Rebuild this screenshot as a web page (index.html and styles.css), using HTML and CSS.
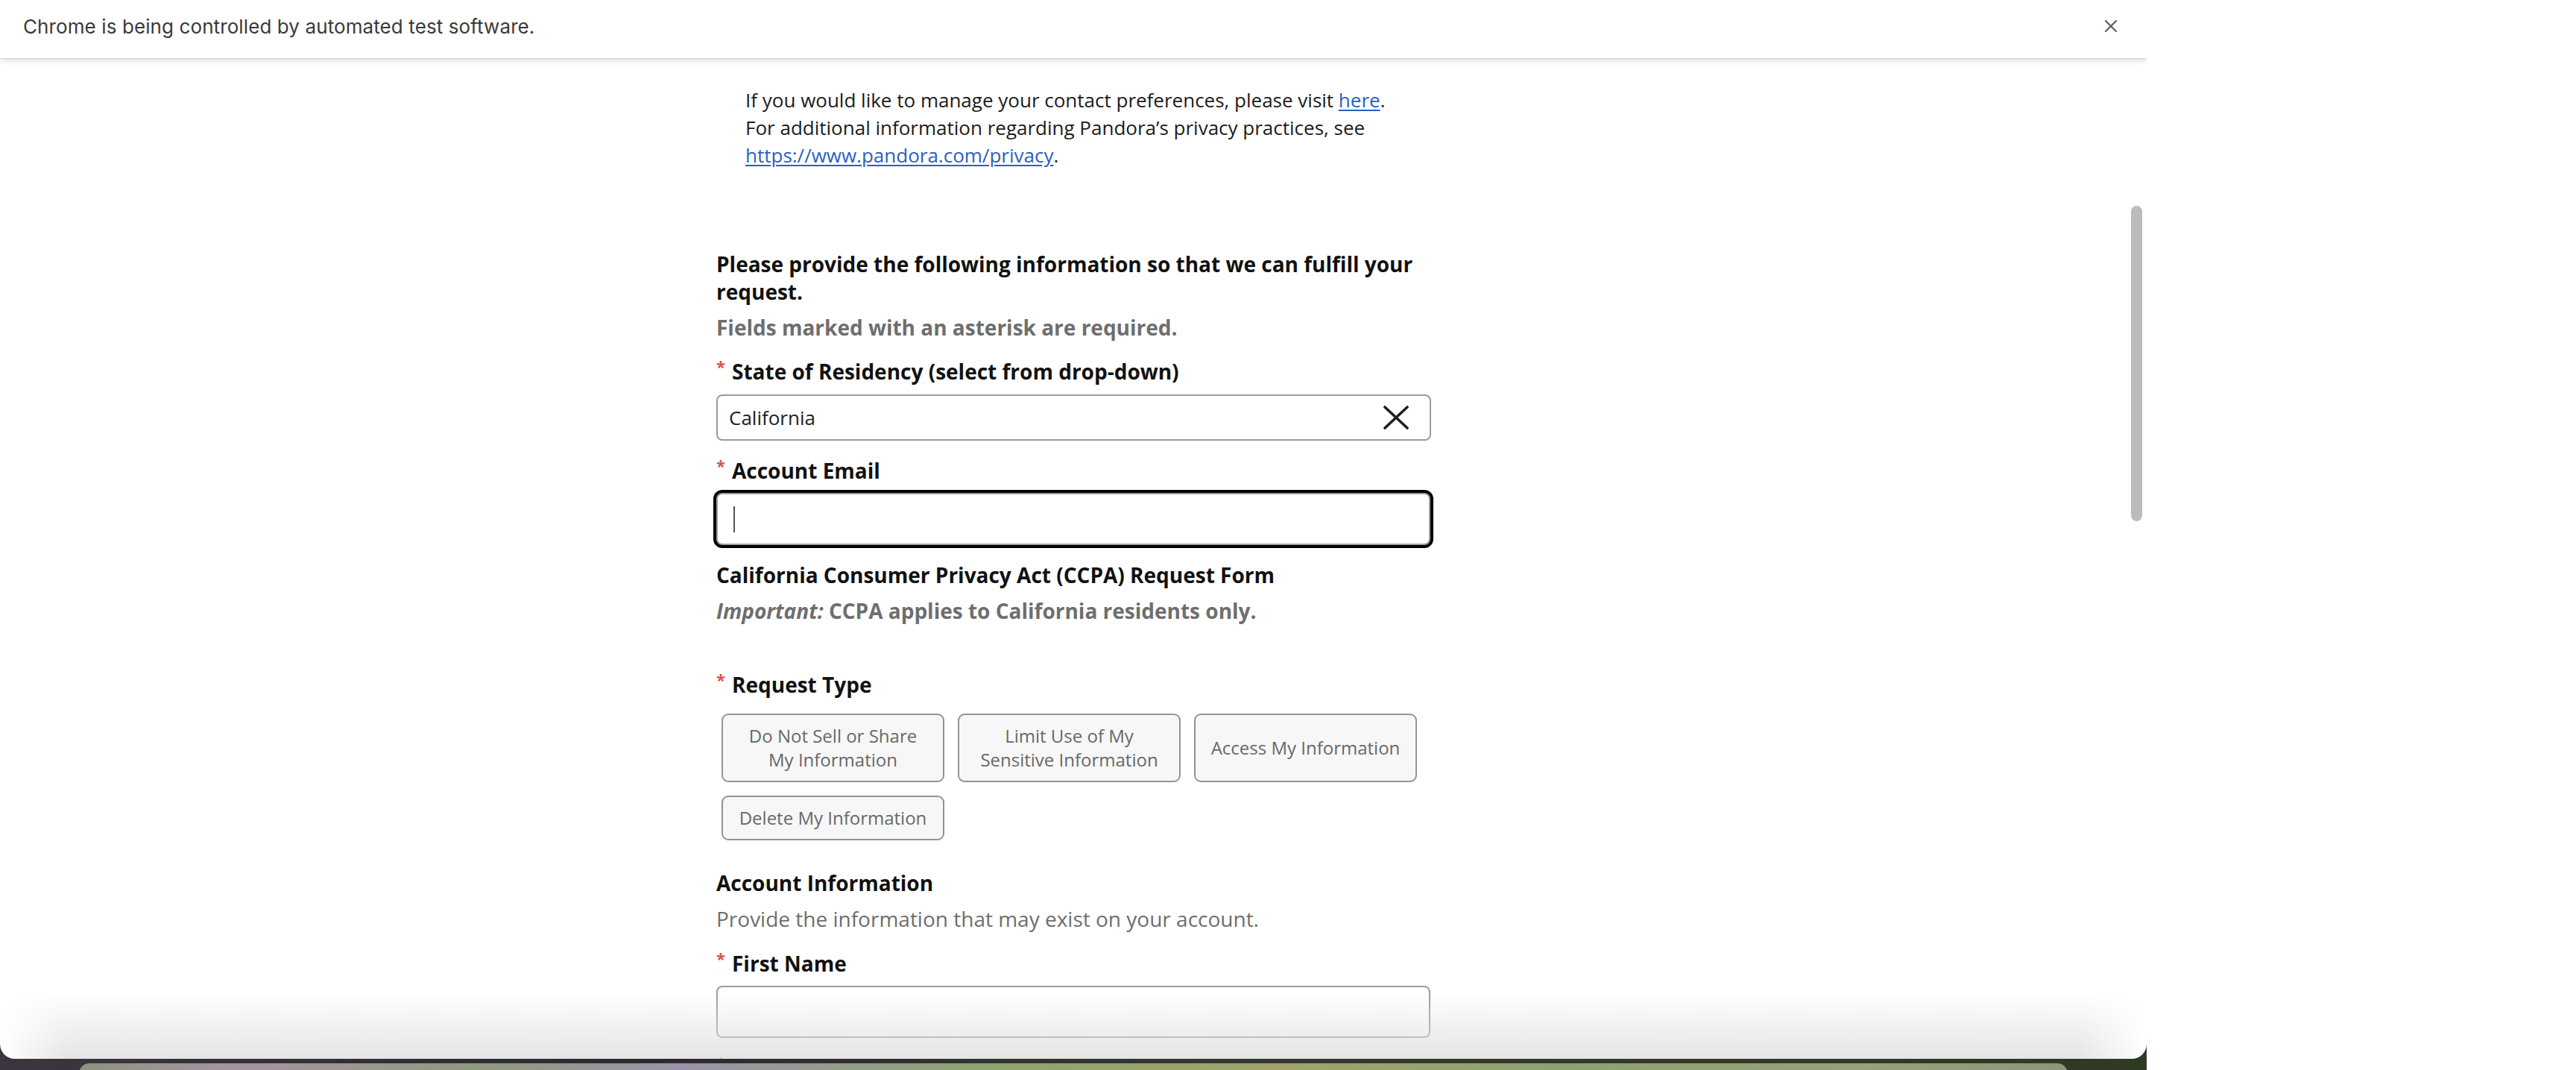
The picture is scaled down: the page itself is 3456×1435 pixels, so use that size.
FILE: index.html
```html
<!DOCTYPE html>
<html lang="en">
<head>
<meta charset="utf-8">
<title>Pandora Privacy Request</title>
<link rel="stylesheet" href="styles.css">
</head>
<body>
<div class="desktop">
  <div class="window">
    <div class="infobar">
      <span class="infobar-text">Chrome is being controlled by automated test software.</span>
      <svg class="infobar-close" width="18" height="18" viewBox="0 0 18 18"><path d="M2 2 L16 16 M16 2 L2 16" stroke="#5f6368" stroke-width="2.4" stroke-linecap="round" fill="none"/></svg>
    </div>
    <div class="viewport">
      <main class="page">
        <div class="intro">
          <p class="intro-line">If you would like to manage your contact preferences, please visit <a href="#">here</a>.</p>
          <p class="intro-line">For additional information regarding Pandora’s privacy practices, see <a href="#">https://www.pandora.com/privacy</a>.</p>
        </div>
        <form class="form">
          <h2 class="lead">Please provide the following information so that we can fulfill your request.</h2>
          <p class="note">Fields marked with an asterisk are required.</p>

          <div class="field">
            <div class="label"><span class="req">*</span>State of Residency (select from drop-down)</div>
            <div class="select">
              <span>California</span>
              <svg class="clear" width="34" height="32" viewBox="0 0 34 32"><path d="M2 2 L32 30 M32 2 L2 30" stroke="#1e1e1e" stroke-width="3.6" stroke-linecap="round" fill="none"/></svg>
            </div>
          </div>

          <div class="field">
            <div class="label"><span class="req">*</span>Account Email</div>
            <div class="input input-focus"><span class="caret"></span></div>
          </div>

          <h3 class="section-title">California Consumer Privacy Act (CCPA) Request Form</h3>
          <p class="note note-tight"><em>Important:</em> CCPA applies to California residents only.</p>

          <div class="field field-request">
            <div class="label"><span class="req">*</span>Request Type</div>
            <div class="choices">
              <button type="button" class="choice">Do Not Sell or Share My Information</button>
              <button type="button" class="choice">Limit Use of My Sensitive Information</button>
              <button type="button" class="choice">Access My Information</button>
              <button type="button" class="choice">Delete My Information</button>
            </div>
          </div>

          <h3 class="section-title section-account">Account Information</h3>
          <p class="sub">Provide the information that may exist on your account.</p>

          <div class="field field-name">
            <div class="label"><span class="req">*</span>First Name</div>
            <div class="input"></div>
          </div>

          <div class="field">
            <div class="label"><span class="req">*</span></div>
          </div>
        </form>
      </main>
      <div class="scrollbar"><div class="thumb"></div></div>
      <div class="fade"></div>
    </div>
  </div>
  <div class="dock"></div>
</div>
<div class="blank"></div>
</body>
</html>
```

FILE: styles.css
```css
html, body {
  margin: 0;
  padding: 0;
}

body {
  width: 3456px;
  height: 1435px;
  display: flex;
  overflow: hidden;
  background: #ffffff;
  font-family: "Open Sans", "Noto Sans", sans-serif;
}

.desktop {
  width: 2880px;
  height: 1435px;
  flex-shrink: 0;
  display: flex;
  flex-direction: column;
  overflow: hidden;
  background: linear-gradient(90deg, #3b3540 0%, #2c2a31 30%, #35392f 60%, #2f3a24 100%);
}

.blank {
  flex: 1;
  background: #ffffff;
}

.window {
  height: 1420px;
  flex-shrink: 0;
  background: #ffffff;
  border-radius: 0 0 20px 20px;
  display: flex;
  flex-direction: column;
  overflow: hidden;
  position: relative;
}

.dock {
  margin: 6px 106px 0 106px;
  height: 40px;
  flex-shrink: 0;
  border-radius: 14px 14px 0 0;
  background: linear-gradient(90deg, #8d937f 0%, #a4949f 8%, #8f9a7d 20%, #9b93a9 30%, #8ea372 45%, #a0a36b 60%, #8da26f 75%, #97a07b 90%, #8c9679 100%);
}

/* Chrome infobar */
.infobar {
  height: 78px;
  flex-shrink: 0;
  box-sizing: border-box;
  display: flex;
  align-items: center;
  justify-content: space-between;
  padding: 0 39px 8px 31px;
  background: #ffffff;
  box-shadow: 0 1px 0 #d6d6d6, 0 3px 8px rgba(0, 0, 0, 0.14);
  position: relative;
  z-index: 2;
}

.infobar-text {
  font-family: "Inter", "Liberation Sans", sans-serif;
  font-size: 26px;
  color: #3a3a3a;
  letter-spacing: 0.1px;
}

.infobar-close {
  display: block;
}

/* page viewport */
.viewport {
  flex: 1;
  display: flex;
  position: relative;
  min-height: 0;
}

.page {
  flex: 1;
  padding: 38px 0 0 961px;
  overflow: hidden;
}

.scrollbar {
  width: 30px;
  flex-shrink: 0;
  padding-top: 198px;
  box-sizing: border-box;
}

.thumb {
  width: 15px;
  height: 423px;
  margin-left: 9px;
  border-radius: 8px;
  background: #bcbcbc;
}

.fade {
  position: absolute;
  left: 0;
  right: 0;
  bottom: 0;
  height: 90px;
  background: linear-gradient(to bottom, rgba(225, 225, 225, 0) 0%, rgba(222, 222, 222, 0.8) 100%);
  -webkit-mask-image: linear-gradient(to right, transparent 0, #000 90px, #000 calc(100% - 90px), transparent 100%);
  mask-image: linear-gradient(to right, transparent 0, #000 90px, #000 calc(100% - 90px), transparent 100%);
  pointer-events: none;
}

/* intro */
.intro {
  margin-left: 39px;
  width: 880px;
}

.intro-line {
  margin: 0;
  font-size: 26px;
  line-height: 37px;
  color: #1c1c1c;
}

.intro-line a {
  color: #2b60c4;
  text-decoration: underline;
  text-underline-offset: 3px;
}

/* form */
.form {
  width: 960px;
  margin-top: 109px;
}

.lead {
  margin: 0;
  font-size: 28px;
  font-weight: 700;
  line-height: 37px;
  color: #111111;
}

.note {
  margin: 11px 0 0;
  font-size: 28px;
  font-weight: 700;
  line-height: 37px;
  color: #6e6e6e;
}

.note em {
  font-style: italic;
}

.field {
  margin-top: 22px;
}

.label {
  font-size: 28px;
  font-weight: 700;
  line-height: 37px;
  color: #111111;
}

.req {
  display: inline-block;
  vertical-align: top;
  width: 21px;
  font-size: 22px;
  line-height: 22px;
  color: #d5564d;
}

.select {
  margin-top: 12px;
  width: 959px;
  height: 62px;
  box-sizing: border-box;
  border: 2px solid #9b9b9b;
  border-radius: 8px;
  display: flex;
  align-items: center;
  justify-content: space-between;
  padding: 0 28px 0 15px;
  font-size: 26px;
  color: #222222;
}

.clear {
  display: block;
}

.input {
  margin-top: 11px;
  width: 958px;
  height: 70px;
  box-sizing: border-box;
  border: 2px solid #9b9b9b;
  border-radius: 8px;
  display: flex;
  align-items: center;
  padding-left: 21px;
  background: #ffffff;
}

.input-focus {
  border-color: #a0a0a0;
  box-shadow: 0 0 0 4px #000000;
}

.caret {
  width: 2px;
  height: 35px;
  background: #555555;
}

.section-title {
  margin: 22px 0 0;
  font-size: 28px;
  font-weight: 700;
  line-height: 37px;
  color: #111111;
}

.field-request {
  margin-top: 62px;
}

.choices {
  margin-top: 20px;
  padding-left: 7px;
  display: flex;
  flex-wrap: wrap;
  gap: 18px;
}

.choice {
  width: 299px;
  box-sizing: border-box;
  padding: 12px 19px;
  border: 2px solid #939393;
  border-radius: 9px;
  background: #f7f7f7;
  font-family: "Open Sans", "Noto Sans", sans-serif;
  font-size: 24px;
  line-height: 32px;
  color: #686868;
  text-align: center;
  display: flex;
  align-items: center;
  justify-content: center;
}

.section-account {
  margin-top: 39px;
}

.sub {
  margin: 11px 0 0;
  font-size: 28px;
  line-height: 37px;
  color: #6e6e6e;
}

.field-name {
  margin-top: 23px;
}
```
